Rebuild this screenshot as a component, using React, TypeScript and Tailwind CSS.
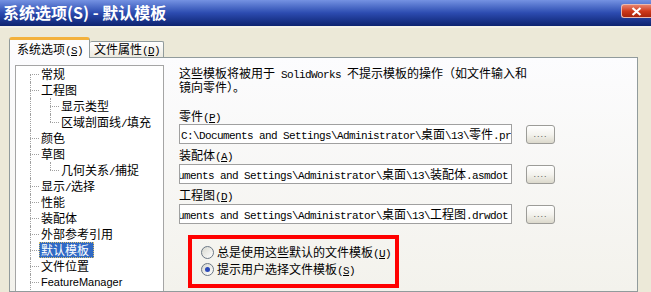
import React from "react";

const MONO = "font-['Liberation_Mono',monospace] text-[11px] leading-[12px] tracking-[-0.6px]";
const CJK = "font-['Noto_Sans_CJK_SC',sans-serif] text-[12px] leading-[12px]";

function T({ s }: { s: string }) {
  const tokens: { text: string; ascii: boolean; u: boolean }[] = [];
  for (let k = 0; k < s.length; k++) {
    let ch = s[k];
    let u = false;
    if (ch === "&") {
      u = true;
      k++;
      ch = s[k];
    }
    const ascii = ch.charCodeAt(0) < 128;
    const last = tokens[tokens.length - 1];
    if (last && last.ascii === ascii && !u && !last.u) last.text += ch;
    else tokens.push({ text: ch, ascii, u });
  }
  return (
    <>
      {tokens.map((t, i) => (
        <span key={i} className={(t.ascii ? MONO : CJK) + (t.u ? " underline underline-offset-1" : "")}>
          {t.text}
        </span>
      ))}
    </>
  );
}

function RootConn({ first }: { first?: boolean }) {
  return (
    <div className="flex w-[9px] shrink-0 flex-col">
      <div className={first ? "h-[8px]" : "h-[8px] border-l border-dotted border-[#a0a0a0]"} />
      <div className="flex-1 border-l border-t border-dotted border-[#a0a0a0]" />
    </div>
  );
}

function ChildConn({ last }: { last?: boolean }) {
  return (
    <div className="flex w-[9px] shrink-0 flex-col">
      <div className="h-[8px] border-l border-dotted border-[#a0a0a0]" />
      <div
        className={
          last
            ? "flex-1 border-t border-dotted border-[#a0a0a0]"
            : "flex-1 border-l border-t border-dotted border-[#a0a0a0]"
        }
      />
    </div>
  );
}

type Row = { t: string; l: number; last?: boolean; sel?: boolean; latin?: boolean };
const rows: Row[] = [
  { t: "常规", l: 0 },
  { t: "工程图", l: 0 },
  { t: "显示类型", l: 1 },
  { t: "区域剖面线/填充", l: 1, last: true },
  { t: "颜色", l: 0 },
  { t: "草图", l: 0 },
  { t: "几何关系/捕捉", l: 1, last: true },
  { t: "显示/选择", l: 0 },
  { t: "性能", l: 0 },
  { t: "装配体", l: 0 },
  { t: "外部参考引用", l: 0 },
  { t: "默认模板", l: 0, sel: true },
  { t: "文件位置", l: 0 },
  { t: "FeatureManager", l: 0, latin: true },
];

function Radio({ checked }: { checked?: boolean }) {
  return (
    <div className="flex h-[13px] w-[13px] shrink-0 items-center justify-center rounded-full border border-[#6b7785] bg-linear-to-br from-[#d8d8d0] to-[#ffffff]">
      {checked && <div className="h-[5px] w-[5px] rounded-full bg-[#2a48b8]" />}
    </div>
  );
}

function Line({ s, className }: { s: string; className?: string }) {
  return (
    <div className={"flex h-[14px] items-center whitespace-pre " + (className ?? "")}>
      <span className="font-['Noto_Sans_CJK_SC',sans-serif] text-[12px] leading-[14px]">
        <T s={s} />
      </span>
    </div>
  );
}

function PathRow({ text, scrolled }: { text: string; scrolled?: boolean }) {
  return (
    <div className="flex items-start">
      <div
        className={
          "flex h-[20px] w-[333px] shrink-0 items-center overflow-hidden whitespace-pre border border-[#a0a0a0] bg-white " +
          (scrolled ? "justify-end pr-[3px]" : "justify-start pl-[1px]")
        }
      >
        <span className="shrink-0 font-['Noto_Sans_CJK_SC',sans-serif] text-[12px] leading-[14px] text-black">
          <T s={text} />
        </span>
      </div>
      <div className="ml-[14px] mt-[1px] flex h-[19px] w-[29px] items-center justify-center rounded-[3px] border border-[#9c9c98] bg-linear-to-b from-[#ffffff] via-[#f4f3ee] to-[#dcd9cc]">
        <span className="font-['Liberation_Sans',sans-serif] text-[9px] leading-[9px] tracking-[1px] text-[#5a5a5a]">....</span>
      </div>
    </div>
  );
}

export default function App() {
  return (
    <div className="flex h-[292px] w-[651px] flex-col overflow-hidden bg-[#ece9d8]">
      {/* title bar */}
      <div className="flex h-[26px] shrink-0 items-start bg-linear-to-b from-[#7592e2] via-[#2c4bb0] to-[#0d2370]">
        <div className="pl-[3px] font-['Noto_Sans_CJK_SC',sans-serif] text-[16px] font-bold leading-[24px] text-white">
          系统选项(S) - 默认模板
        </div>
        <div className="ml-auto mt-[4px] flex h-[14px] w-[30px] items-center justify-center rounded-l-[3px] border border-r-0 border-[#e8b8b0] bg-linear-to-b from-[#e9806a] via-[#cf3a1c] to-[#a8240c]">
          <svg width="11" height="9" viewBox="0 0 11 9">
            <path d="M1.5 1 L9.5 8 M9.5 1 L1.5 8" stroke="white" strokeWidth="2.2" />
          </svg>
        </div>
      </div>
      <div className="h-[2px] shrink-0 bg-[#f3f1e8]" />

      {/* body */}
      <div className="flex min-h-0 flex-1 flex-col pl-[9px] pr-[13px] pt-[9px]">
        {/* tabs */}
        <div className="flex h-[20px] shrink-0 items-end">
          <div className="relative z-10 -mb-px flex h-[21px] w-[81px] items-center rounded-t-[3px] border-x border-t-[3px] border-x-[#919b9c] border-t-[#f3b13c] bg-[#fcfcfe] pl-[7px]">
            <Line s="系统选项(&S)" className="text-black" />
          </div>
          <div className="flex h-[16px] w-[74px] items-center rounded-t-[2px] border-r border-t border-[#919b9c] bg-linear-to-b from-[#ffffff] to-[#eceae0] pl-[4px]">
            <Line s="文件属性(&D)" className="text-black" />
          </div>
        </div>

        {/* panel */}
        <div className="flex min-h-0 flex-1 border border-[#919b9c] bg-linear-to-b from-[#fcfcfe] to-[#f3f2ec] pl-[5px] pt-[7px]">
          {/* tree */}
          <div className="w-[149px] shrink-0 self-stretch border border-b-0 border-[#a5a5a5] bg-white">
            {rows.map((r, i) => (
              <div key={i} className="flex h-[16px]">
                <div className="w-[14px] shrink-0" />
                {r.l === 0 ? (
                  <RootConn first={i === 0} />
                ) : (
                  <>
                    <div className="w-[20px] shrink-0 border-l border-dotted border-[#a0a0a0]" />
                    <ChildConn last={r.last} />
                  </>
                )}
                <div
                  className={
                    r.sel
                      ? "flex h-[16px] items-center whitespace-nowrap border border-dotted border-[#d8c070] bg-[#316ac5] pl-[1px] pr-[4px] text-white"
                      : "flex h-[16px] items-center whitespace-nowrap border border-transparent pl-[1px] pr-[4px] text-black"
                  }
                >
                  {r.latin ? (
                    <span className="font-['Liberation_Sans',sans-serif] text-[11px] leading-[14px]">{r.t}</span>
                  ) : (
                    <Line s={r.t} />
                  )}
                </div>
              </div>
            ))}
          </div>

          {/* right column */}
          <div className="ml-[15px] flex flex-col pt-[1px] text-black">
            <Line s="这些模板将被用于 SolidWorks 不提示模板的操作（如文件输入和" />
            <Line s="镜向零件）。" />

            <Line s="零件(&P)" className="mt-[15px]" />
            <div className="mt-[1px]">
              <PathRow text={"C:\\Documents and Settings\\Administrator\\桌面\\13\\零件.prtdot"} />
            </div>

            <Line s="装配体(&A)" className="mt-[4px]" />
            <div className="mt-[2px]">
              <PathRow scrolled text={"C:\\Documents and Settings\\Administrator\\桌面\\13\\装配体.asmdot"} />
            </div>

            <Line s="工程图(&D)" className="mt-[4px]" />
            <div className="mt-[2px]">
              <PathRow scrolled text={"C:\\Documents and Settings\\Administrator\\桌面\\13\\工程图.drwdot"} />
            </div>

            <div className="ml-[9px] mt-[11px] flex h-[53px] w-[211px] shrink-0 flex-col border-4 border-[#ff0000] pl-[9px] pt-[5px]">
              <div className="flex h-[17px] items-center gap-[3px]">
                <Radio />
                <Line s="总是使用这些默认的文件模板(&U)" />
              </div>
              <div className="flex h-[17px] items-center gap-[3px]">
                <Radio checked />
                <Line s="提示用户选择文件模板(&S)" />
              </div>
            </div>
          </div>
        </div>
      </div>
    </div>
  );
}
